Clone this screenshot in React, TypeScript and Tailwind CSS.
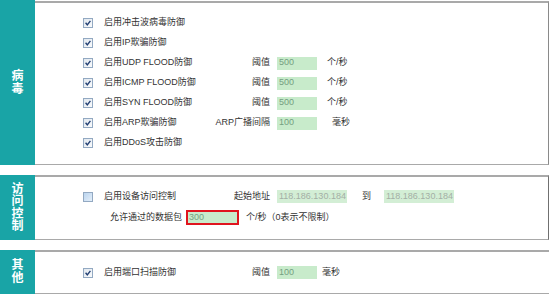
const font = { fontFamily: '"Liberation Sans", "Noto Sans CJK SC", sans-serif' };

const Check = ({ checked }: { checked: boolean }) => (
  <svg width="10" height="10" viewBox="0 0 10 10" className="shrink-0">
    <defs>
      <linearGradient id={checked ? "cbOn" : "cbOff"} x1="0" y1="0" x2="1" y2="1">
        <stop offset="0" stopColor={checked ? "#dfe6ee" : "#b9d3ee"} />
        <stop offset="1" stopColor={checked ? "#fbfcfd" : "#e6f0fa"} />
      </linearGradient>
    </defs>
    <rect x="0.5" y="0.5" width="9" height="9" fill={`url(#${checked ? "cbOn" : "cbOff"})`} stroke="#93a9c2" />
    {checked && (
      <path d="M2.6 4.8 L4.3 6.9 L7.4 2.9" fill="none" stroke="#223f73" strokeWidth="1.4" />
    )}
  </svg>
);

const Field = ({ value, w = "w-[40px]", ip = false }: { value: string; w?: string; ip?: boolean }) => (
  <div
    className={`${w} h-[13px] flex items-center pl-[2px] text-[9px] ${
      ip ? "bg-[#d3eed5] text-[#a3aea5]" : "bg-[#c8ebcb] text-[#74a080]"
    }`}
  >
    {value}
  </div>
);

type RowProps = {
  checked: boolean;
  label: string;
  right?: string;
  value?: string;
  unit?: string;
  unitGap?: string;
};

const Row = ({ checked, label, right, value, unit, unitGap = "ml-[10px]" }: RowProps) => (
  <div className="h-[20px] flex items-center">
    <div className="w-[48px]" />
    <Check checked={checked} />
    <div className="w-[110px] ml-[11px] whitespace-nowrap">{label}</div>
    {right && (
      <>
        <div className="w-[56px] text-right whitespace-nowrap">{right}</div>
        <div className="ml-[7px]">
          <Field value={value || ""} />
        </div>
        <div className={`${unitGap} whitespace-nowrap`}>{unit}</div>
      </>
    )}
  </div>
);

const Side = ({ text, lh }: { text: string; lh: string }) => (
  <div className="w-[35px] bg-[#19a4a6] flex items-center justify-center">
    <div className={`w-[13px] text-white font-bold text-[12px] ${lh} text-center break-all`}>
      {text}
    </div>
  </div>
);

export default function App() {
  return (
    <div className="w-[550px] h-[295px] bg-white text-[#333] text-[9px] overflow-hidden" style={font}>
      <div className="flex h-[165px]">
        <Side text="病毒" lh="leading-[13px]" />
        <div className="flex-1 mr-[1px] mt-[1px] border border-l-0 border-t-2 border-[#a9a9a9] border-r-[#8a8a8a] pt-[10px]">
          <Row checked label="启用冲击波病毒防御" />
          <Row checked label="启用IP欺骗防御" />
          <Row checked label="启用UDP FLOOD防御" right="阈值" value="500" unit="个/秒" />
          <Row checked label="启用ICMP FLOOD防御" right="阈值" value="500" unit="个/秒" />
          <Row checked label="启用SYN FLOOD防御" right="阈值" value="500" unit="个/秒" />
          <Row checked label="启用ARP欺骗防御" right="ARP广播间隔" value="100" unit="毫秒" unitGap="ml-[15px]" />
          <Row checked label="启用DDoS攻击防御" />
        </div>
      </div>

      <div className="flex h-[65px] mt-[10px]">
        <Side text="访问控制" lh="leading-[12.5px]" />
        <div className="flex-1 mr-[1px] border border-l-0 border-t-2 border-[#a9a9a9] border-r-[#707070] pt-[9px]">
          <div className="h-[21px] flex items-center">
            <div className="w-[48px]" />
            <Check checked={false} />
            <div className="w-[110px] ml-[11px] whitespace-nowrap">启用设备访问控制</div>
            <div className="w-[56px] text-right whitespace-nowrap">起始地址</div>
            <div className="ml-[7px]">
              <Field value="118.186.130.184" w="w-[70px]" ip />
            </div>
            <div className="ml-[15px] w-[8px]">到</div>
            <div className="ml-[14px]">
              <Field value="118.186.130.184" w="w-[70px]" ip />
            </div>
          </div>
          <div className="h-[21px] flex items-center">
            <div className="w-[75px]" />
            <div className="whitespace-nowrap">允许通过的数据包</div>
            <div className="ml-[4px] w-[53px] h-[15px] border-2 border-[#e0141e] bg-[#c8ebcb] text-[#74a080] flex items-center pl-[1px]">
              300
            </div>
            <div className="ml-[7px] whitespace-nowrap">个/秒（0表示不限制）</div>
          </div>
        </div>
      </div>

      <div className="flex h-[44px] mt-[10px]">
        <Side text="其他" lh="leading-[13px]" />
        <div className="flex-1 mr-[1px] border border-l-0 border-t-2 border-[#a9a9a9] border-r-0 flex items-center">
          <Row checked label="启用端口扫描防御" right="阈值" value="100" unit="毫秒" unitGap="ml-[5px]" />
        </div>
      </div>
    </div>
  );
}
